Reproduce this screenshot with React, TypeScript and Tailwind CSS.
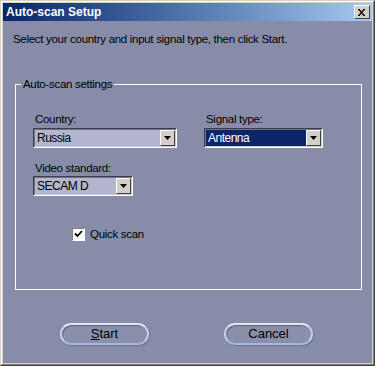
import React from 'react';

const font = { fontFamily: '"Liberation Sans", Arial, sans-serif' };

function Combo({ value, width, selected }: { value: string; width: string; selected?: boolean }) {
  return (
    <div
      className={`flex h-[20px] items-center border border-t-[#3c3e4c] border-l-[#3c3e4c] border-b-white border-r-white ${width}`}
    >
      <div
        className={`flex h-full flex-1 items-center border border-t-[#6e7288] border-l-[#6e7288] border-b-[#c8c9dc] border-r-[#c8c9dc] ${
          selected ? 'bg-[#0c2468]' : 'bg-[#b4b5cf]'
        }`}
      >
        <span
          className={`flex-1 pl-[2px] text-[12px] leading-[15px] tracking-[-0.5px] ${selected ? 'text-white' : 'text-black'}`}
        >
          {value}
        </span>
        <div className="flex h-[16px] w-[15px] items-center justify-center border border-t-white border-l-white border-b-[#404040] border-r-[#404040] bg-[#d4d0c8]">
          <svg width="7" height="4" viewBox="0 0 7 4">
            <polygon points="0,0 7,0 3.5,4" fill="#000" />
          </svg>
        </div>
      </div>
    </div>
  );
}

function PillButton({ children }: { children: React.ReactNode }) {
  return (
    <button className="flex h-[22px] w-[89px] items-center justify-center rounded-full border-2 border-t-[#dfe4f0] border-l-[#c9d0e2] border-b-[#a9b8d8] border-r-[#c6d2ec] bg-[#8a90ab] text-[13px] text-black shadow-[inset_1px_1px_1px_#5c6178,1px_1px_1px_#6c7290]">
      {children}
    </button>
  );
}

const label = 'text-[11.5px] leading-[14px] tracking-[-0.3px] text-black';

export default function App() {
  return (
    <div
      className="h-[366px] w-[375px] border border-t-[#d4d0c8] border-l-[#d4d0c8] border-b-[#404040] border-r-[#404040]"
      style={font}
    >
      <div className="flex h-full flex-col border border-t-white border-l-white border-b-[#808080] border-r-[#808080] bg-[#d4d0c8] p-px">
        <div className="flex h-[18px] items-center bg-gradient-to-r from-[#0a246a] to-[#a6caf0] pl-[3px] pr-[2px]">
          <span className="flex-1 text-[12px] font-bold leading-[14px] text-white">Auto-scan Setup</span>
          <div className="flex h-[14px] w-[16px] items-center justify-center border border-t-white border-l-white border-b-[#404040] border-r-[#404040] bg-[#d4d0c8]">
            <svg width="8" height="7" viewBox="0 0 8 7">
              <path d="M0 0L6 7M1 0L7 7M6 0L0 7M7 0L1 7" stroke="#000" strokeWidth="1" />
            </svg>
          </div>
        </div>

        <div className="flex flex-1 flex-col bg-[#878da8]">
          <p className={`mt-[11px] pl-[10px] ${label}`}>
            Select your country and input signal type, then click Start.
          </p>

          <div className="relative ml-[12px] mt-[38px] h-[206px] w-[347px] border border-white">
            <span className={`absolute -top-[8px] left-[5px] bg-[#878da8] px-[2px] ${label}`}>
              Auto-scan settings
            </span>

            <div className="flex pl-[17px] pt-[27px]">
              <div className="flex flex-col">
                <span className={`pl-[2px] ${label}`}>Country:</span>
                <div className="mt-[2px]">
                  <Combo value="Russia" width="w-[144px]" />
                </div>
                <span className={`mt-[13px] pl-[2px] ${label}`}>Video standard:</span>
                <div className="mt-px">
                  <Combo value="SECAM D" width="w-[100px]" />
                </div>
              </div>
              <div className="ml-[27px] flex flex-col">
                <span className={`pl-[2px] ${label}`}>Signal type:</span>
                <div className="mt-[2px]">
                  <Combo value="Antenna" width="w-[119px]" selected />
                </div>
              </div>
            </div>

            <div className="ml-[56px] mt-[31px] flex items-center">
              <div className="flex h-[13px] w-[13px] items-center justify-center border border-t-[#808080] border-l-[#808080] border-b-white border-r-white bg-white">
                <svg width="9" height="8" viewBox="0 0 9 8">
                  <path d="M1 3.5L3.5 6L8 1" fill="none" stroke="#000" strokeWidth="1.8" />
                </svg>
              </div>
              <span className={`ml-[5px] ${label}`}>Quick scan</span>
            </div>
          </div>

          <div className="mt-[33px] flex pl-[57px]">
            <PillButton>
              <span>
                <span className="underline">S</span>tart
              </span>
            </PillButton>
            <div className="ml-[75px]">
              <PillButton>Cancel</PillButton>
            </div>
          </div>
        </div>
      </div>
    </div>
  );
}
